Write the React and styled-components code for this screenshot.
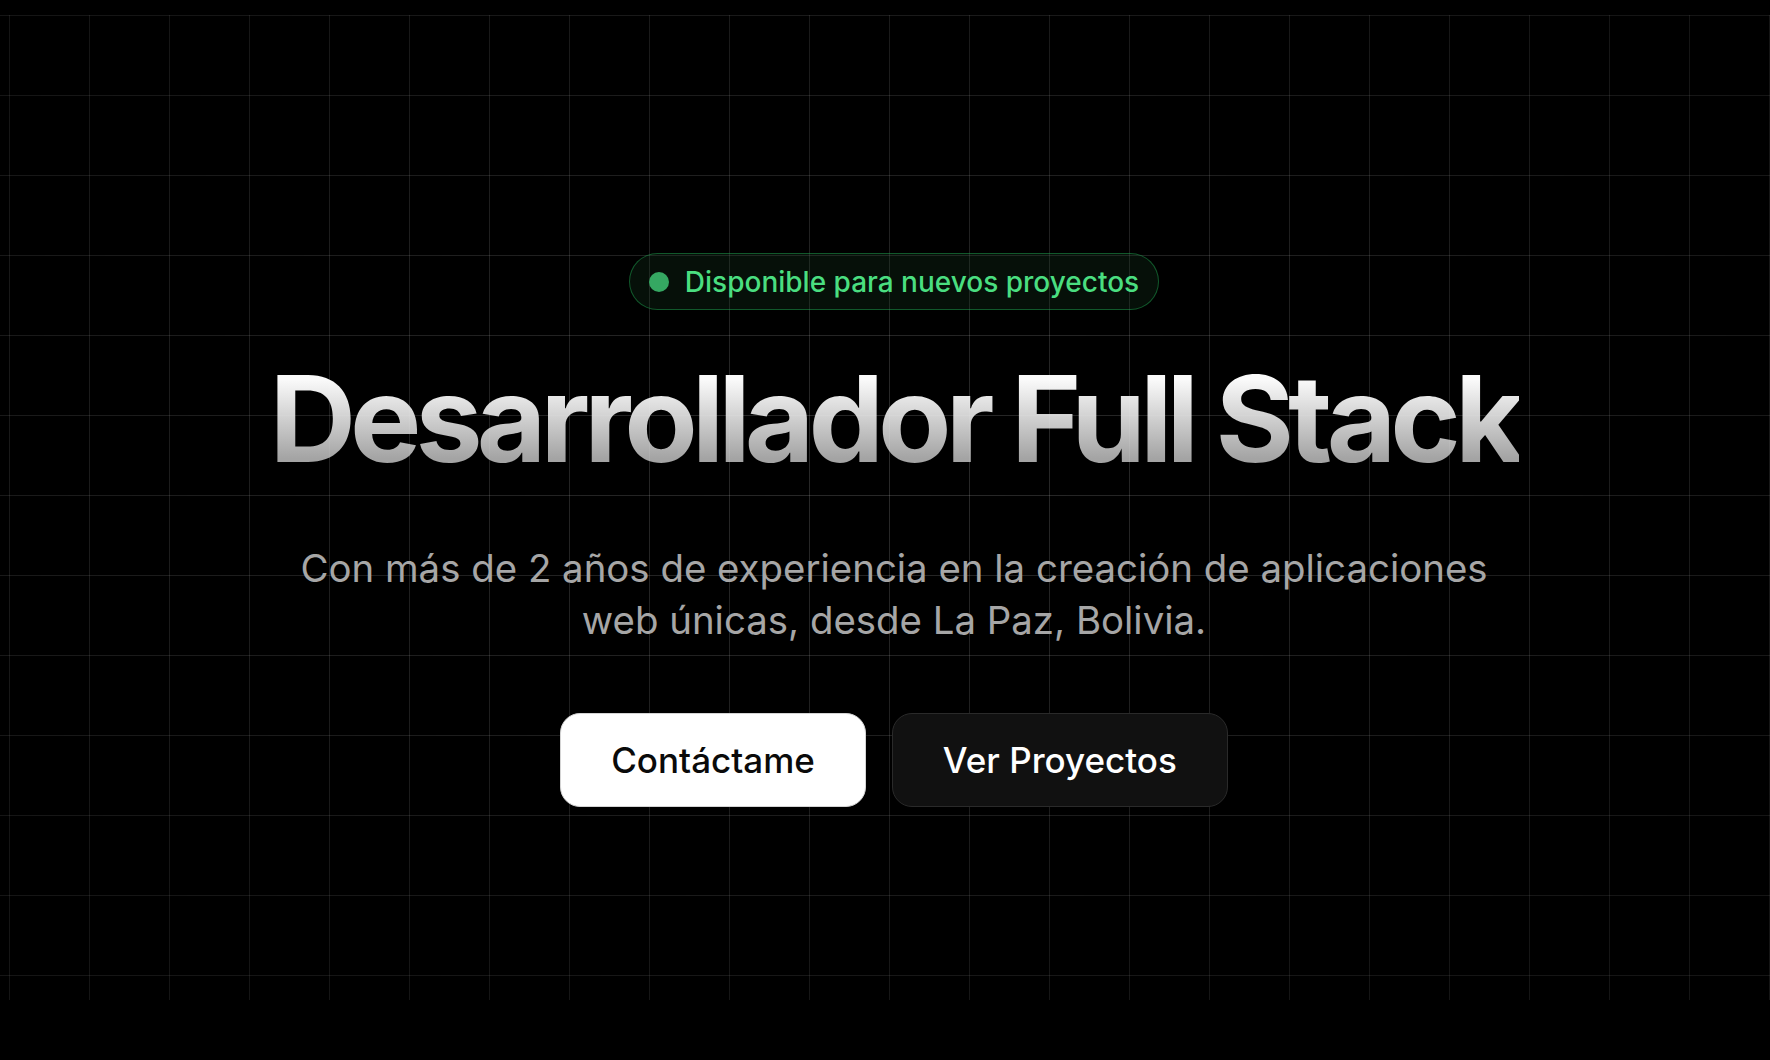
import React from 'react'
import styled, { createGlobalStyle } from 'styled-components'

const GlobalStyle = createGlobalStyle`
    html, body {
        margin: 0;
        padding: 0;
        background: #000;
        font-family: Inter, "Noto Sans", "Liberation Sans", sans-serif;
        -webkit-font-smoothing: antialiased;
    }
    * {
        box-sizing: border-box;
    }
`

const Hero = styled.section`
    position: relative;
    min-height: 1060px;
    display: flex;
    align-items: center;
    justify-content: center;
    padding-left: 18px;
    overflow: hidden;
`

const GridBackdrop = styled.div`
    position: absolute;
    top: 15px;
    bottom: 60px;
    left: 0;
    right: 0;
    z-index: 0;
    pointer-events: none;
    background-image:
        linear-gradient(to right, rgba(255, 255, 255, 0.16) 1px, transparent 1px),
        linear-gradient(to bottom, rgba(255, 255, 255, 0.16) 1px, transparent 1px);
    background-size: 80px 80px;
    background-position: 9px 0;
    -webkit-mask-image: radial-gradient(ellipse 65% 60% at 50% 45%, #000 0%, rgba(0, 0, 0, 0.5) 100%);
    mask-image: radial-gradient(ellipse 65% 60% at 50% 45%, #000 0%, rgba(0, 0, 0, 0.5) 100%);
`

const Content = styled.div`
    position: relative;
    z-index: 1;
    display: flex;
    flex-direction: column;
    align-items: center;
    text-align: center;
`

const Badge = styled.div`
    display: inline-flex;
    align-items: center;
    gap: 16px;
    height: 57px;
    padding: 0 19px;
    border-radius: 999px;
    border: 1.5px solid rgba(34, 197, 94, 0.4);
    background: rgba(22, 60, 36, 0.26);
    color: #4ade80;
    font-size: 28px;
    font-weight: 500;
    line-height: 1;
`

const Dot = styled.span`
    width: 20px;
    height: 20px;
    border-radius: 50%;
    background: #35a862;
`

const Title = styled.h1`
    margin: 43px 0 0;
    font-size: 120px;
    font-weight: 700;
    line-height: 1.1;
    letter-spacing: -0.05em;
    background: linear-gradient(to bottom, rgba(255, 255, 255, 0.98) 20%, rgba(205, 205, 205, 0.8) 80%);
    -webkit-background-clip: text;
    background-clip: text;
    color: transparent;
    white-space: nowrap;
`

const Lead = styled.p`
    margin: 58px 0 0;
    max-width: 1229px;
    font-size: 38.4px;
    line-height: 51.2px;
    font-weight: 400;
    color: #a6a6a6;
`

const Actions = styled.div`
    display: flex;
    gap: 26px;
    margin-top: 67px;
`

const Button = styled.a`
    display: inline-flex;
    align-items: center;
    justify-content: center;
    height: 94px;
    padding: 0 50px;
    border-radius: 20px;
    font-size: 35px;
    font-weight: 500;
    text-decoration: none;
    cursor: pointer;
    background: ${p => p.$primary ? '#fff' : '#111'};
    color: ${p => p.$primary ? '#0a0a0a' : '#fff'};
    border: 1.5px solid ${p => p.$primary ? '#d4d4d4' : '#2a2a2a'};
`

const App = () => {
    return <>
        <GlobalStyle/>
        <Hero>
            <GridBackdrop/>
            <Content>
                <Badge>
                    <Dot/>
                    Disponible para nuevos proyectos
                </Badge>
                <Title>Desarrollador Full Stack</Title>
                <Lead>
                    Con más de 2 años de experiencia en la creación de aplicaciones web únicas, desde La Paz, Bolivia.
                </Lead>
                <Actions>
                    <Button $primary href="#contacto">Contáctame</Button>
                    <Button href="#proyectos">Ver Proyectos</Button>
                </Actions>
            </Content>
        </Hero>
    </>
}

export default App
